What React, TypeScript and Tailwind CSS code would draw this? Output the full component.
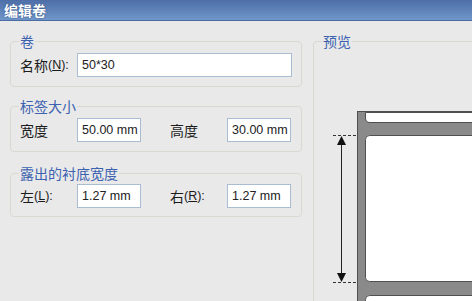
const cjk = "font-['Noto_Sans_CJK_SC','Noto_Sans',sans-serif]";
const latin = "font-['Liberation_Sans','Noto_Sans_CJK_SC',sans-serif]";

function Group({ title, className, children }: { title: string; className?: string; children: React.ReactNode }) {
  return (
    <div className={`relative rounded-[4px] border border-[#d9d9d1] pl-[9px] flex items-start ${className ?? ""}`}>
      <span className={`absolute -top-[10px] left-[8px] bg-[#e9e9e9] px-[1px] text-[14px] leading-[18px] text-[#3c62b0] ${cjk}`}>
        {title}
      </span>
      {children}
    </div>
  );
}

function Label({ children, className }: { children: React.ReactNode; className?: string }) {
  return (
    <span className={`flex h-[24px] items-center text-[14px] text-[#1b1b1b] ${cjk} ${className ?? ""}`}>
      {children}
    </span>
  );
}

function Field({ value, width }: { value: string; width: string }) {
  return (
    <div className={`flex h-[24px] ${width} items-center border border-[#a9bcd2] bg-white pl-[4px] text-[12.5px] text-[#222] ${latin}`}>
      {value}
    </div>
  );
}

function Key({ k }: { k: string }) {
  return (
    <span className={`${latin} text-[12.5px]`}>
      (<span className="underline">{k}</span>):
    </span>
  );
}

export default function App() {
  return (
    <div className="w-[472px] h-[301px] overflow-hidden bg-[#e9e9e9]">
      {/* title bar */}
      <div className="h-[21px] border-b border-[#4b6ba3] bg-gradient-to-b from-[#4e6ea8] to-[#7097c9] pl-[4px] flex items-center">
        <span className={`text-[14px] font-bold text-white [text-shadow:0_0_2px_#2c4a80] ${cjk}`}>编辑卷</span>
      </div>

      <div className="flex pl-[10px] pt-[20px]">
        {/* left column */}
        <div className="flex w-[292px] shrink-0 flex-col">
          <Group title="卷" className="h-[46px] pt-[11px]">
            <Label className="w-[57px]">名称<Key k="N" /></Label>
            <Field value="50*30" width="w-[215px]" />
          </Group>

          <Group title="标签大小" className="mt-[19px] h-[46px] pt-[11px]">
            <Label className="w-[57px]">宽度</Label>
            <Field value="50.00 mm" width="w-[64px]" />
            <Label className="ml-[29px] w-[57px]">高度</Label>
            <Field value="30.00 mm" width="w-[64px]" />
          </Group>

          <Group title="露出的衬底宽度" className="mt-[21px] h-[44px] pt-[10px]">
            <Label className="w-[57px]">左<Key k="L" /></Label>
            <Field value="1.27 mm" width="w-[64px]" />
            <Label className="ml-[29px] w-[57px]">右<Key k="R" /></Label>
            <Field value="1.27 mm" width="w-[64px]" />
          </Group>
        </div>

        {/* preview */}
        <div className="relative ml-[11px] h-[280px] w-[200px] shrink-0 rounded-tl-[4px] border-l border-t border-[#d9d9d1] pl-[16px] pt-[63px]">
          <span className={`absolute -top-[10px] left-[8px] bg-[#e9e9e9] px-[1px] text-[14px] leading-[18px] text-[#3c62b0] ${cjk}`}>
            预览
          </span>
          <svg width="150" height="200" viewBox="0 0 150 200">
            <rect x="27.5" y="6.5" width="140" height="200" fill="#8a8a8a" stroke="#505050" />
            <path d="M170 7.5 H35.5 V13 Q35.5 17.5 40 17.5 H170" fill="#fff" stroke="#505050" />
            <rect x="35.5" y="30.5" width="130" height="146" rx="4" fill="#fff" stroke="#505050" />
            <rect x="35.5" y="190.5" width="130" height="30" rx="4" fill="#fff" stroke="#505050" />
            <line x1="3" y1="30.5" x2="27" y2="30.5" stroke="#333" strokeDasharray="3 2" />
            <line x1="3" y1="177.5" x2="27" y2="177.5" stroke="#333" strokeDasharray="3 2" />
            <line x1="11.5" y1="38" x2="11.5" y2="170" stroke="#222" />
            <polygon points="11.5,31 7,40 16,40" fill="#111" />
            <polygon points="11.5,177 7,168 16,168" fill="#111" />
          </svg>
        </div>
      </div>
    </div>
  );
}
